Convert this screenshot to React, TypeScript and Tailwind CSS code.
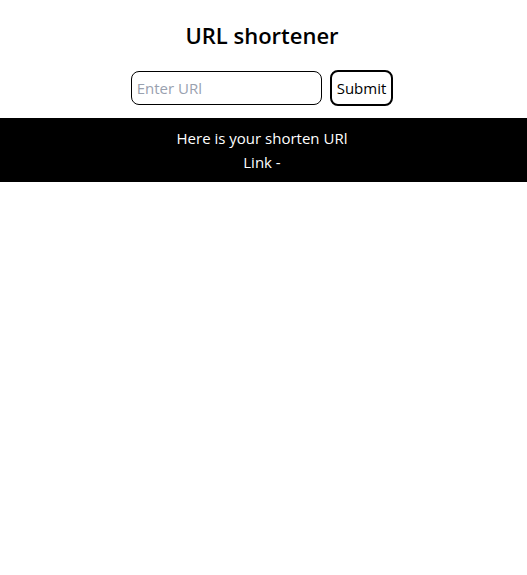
export default function App() {
  return (
    <main className="font-['Open_Sans','Noto_Sans',sans-serif] text-[15px] leading-6 text-black">
      <form className="flex flex-col items-center pt-5 pr-[3px] pb-3" onSubmit={(e) => e.preventDefault()}>
        <h1 className="text-[22px] leading-[30px] font-semibold">URL shortener</h1>
        <div className="mt-5 flex items-center gap-2">
          <input
            type="text"
            aria-label="URL"
            placeholder="Enter URl"
            className="h-[34px] w-[191px] rounded-lg border border-black px-[5px] placeholder:text-gray-400"
          />
          <button type="submit" className="h-9 rounded-lg border-2 border-black px-[5px]">
            Submit
          </button>
        </div>
      </form>
      <section className="bg-black py-2 pr-[3px] text-center text-white">
        <p>Here is your shorten URl</p>
        <p>Link -</p>
      </section>
    </main>
  );
}
